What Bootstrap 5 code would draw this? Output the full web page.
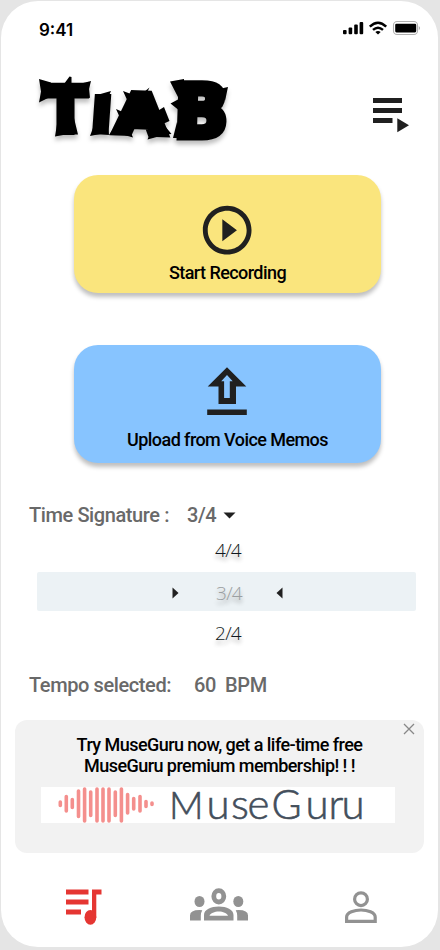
<!DOCTYPE html>
<html lang="en">
<head>
<meta charset="utf-8">
<meta name="viewport" content="width=device-width, initial-scale=1">
<title>TIAB</title>
<link href="https://cdn.jsdelivr.net/npm/bootstrap@5.3.0/dist/css/bootstrap.min.css" rel="stylesheet">
<style>
body{background:#e5e5e5;font-family:Roboto,"Liberation Sans",sans-serif;height:950px;overflow:hidden;padding:1px 2px 3px 1px}
.phone{width:437px;height:946px;background:#fff;border-radius:37px}
.status-bar{height:60px;padding:19px 19px 0 38px}
.clock{font:600 17px/20px Inter,sans-serif;color:#000}
.top-bar{height:114px;padding:10px 26px 0 32px}
.brand{filter:drop-shadow(0 4px 2px rgba(0,0,0,.25))}
.brand text{font-family:"DejaVu Sans",sans-serif;font-weight:700;fill:#000;stroke:#000;stroke-linejoin:miter}
.tile{width:307px;height:118px;margin-left:73px;border:0;border-radius:24px;box-shadow:0 4px 4px rgba(0,0,0,.25);font-size:18px;font-weight:500;line-height:20px;letter-spacing:-.57px;color:#000}
.tile svg{margin-right:1px}
.tile-record{background:#fae57d;padding-top:26px}
.tile-record span{margin-top:4px}
.tile-upload{background:#87c4ff;margin-top:52px;padding-top:22px}
.tile-upload span{margin-top:14px}
.setting{height:24px;font-size:20px;font-weight:500;line-height:24px;letter-spacing:-.4px;color:#696969;padding-left:28px}
.setting-time{margin-top:40px}
.setting-tempo{margin-top:20px}
.setting-time .s-label{width:158px}
.setting-tempo .s-label{width:165px}
.picker{height:126px;font:300 19px/24px "Open Sans",sans-serif;color:#101820;letter-spacing:-.8px;text-shadow:0 4px 4px rgba(0,0,0,.3)}
.picker-option{height:45px;padding:11px 0 0 17px}
.picker-option:last-child{padding-top:10px}
.picker-current{width:379px;height:39px;margin-left:36px;padding:2px 0 0 2px;border-radius:2px;background:#ecf2f5;color:#9b9fa1}
.picker-current span{margin:1px 34px 0 37px}
.promo{width:409px;height:133px;margin:23px 0 0 14px;border-radius:12px;background:#f2f2f2;padding-top:14px;font-size:18px;font-weight:500;line-height:21px;letter-spacing:-.55px;color:#000}
.promo .dismiss{position:absolute;right:9px;top:3px;line-height:0}
.promo-logo{width:354px;height:36px;background:#fff;margin:11px 0 0 26px}
.promo-logo text{font-family:Lato,sans-serif;font-weight:300;letter-spacing:0;fill:#434e5b;stroke:#434e5b;stroke-width:.6px}
.tabs{height:94px}
svg{display:block;flex:none;overflow:visible}
</style>
</head>
<body>
<main class="phone d-flex flex-column">
  <div class="status-bar d-flex justify-content-between">
    <span class="clock">9:41</span>
    <svg width="76" height="16" viewBox="343 20 76 16">
      <g><rect x="343" y="30" width="3.600" height="4.300" rx="1"/><rect x="348.600" y="27.500" width="3.600" height="6.800" rx="1"/><rect x="354.200" y="24.500" width="3.600" height="9.800" rx="1"/><rect x="359.600" y="22" width="3.600" height="12.300" rx="1"/></g>
      <g fill="none" stroke="#000" stroke-width="2.400"><path d="M369.800 26.600Q378 18.700 386.200 26.600M373 29.900q5-4.500 10 0"/></g><path d="M375.300 32q2.700-2.200 5.400 0L378 34.600z"/>
      <rect x="393.500" y="21.500" width="24" height="13" rx="3.600" fill="none" stroke="#b0b0b0" stroke-width="1.100"/><rect x="395.200" y="23.800" width="21" height="8.600" rx="1.300"/><path d="M418.800 26v4.200q2-2.100 0-4.200" fill="#999"/>
    </svg>
  </div>
  <header class="top-bar d-flex justify-content-between">
    <svg class="brand" width="200" height="76" viewBox="33 71 200 76" aria-label="TIAB">
      <text x="45" y="131.500" font-size="62" textLength="41" lengthAdjust="spacingAndGlyphs" stroke-width="7">T</text>
      <text transform="translate(91.500 131) skewX(-4)" font-size="46" textLength="18" lengthAdjust="spacingAndGlyphs" stroke-width="7">I</text>
      <text transform="translate(116 131.500) rotate(2)" font-size="52" textLength="48" lengthAdjust="spacingAndGlyphs" stroke-width="8">A</text>
      <text transform="translate(173.500 136.500) skewX(-2)" font-size="73" textLength="54" lengthAdjust="spacingAndGlyphs" stroke-width="7">B</text>
      <!-- brush flicks around the lettering -->
      <path d="M64 84l5.500-7.500 2 .5v7zM39 79l12 3.500-2 15-10 5 2-11zM91 81l-12 3 2 11 9 3-1-9zM58 118l-3 18.500 11-2zM74 118l4 16.500-11 0zM111 91l-14 4 10 5zM96 120l-6 16 10-2zM107 120l2 15-8-1zM123 91l12 4.500 6-1 8.500-7-3.500 7 6 .5-2 9-22-2zM116 109l9 4-4 7zM156 112l8-5 5.500 14-9 4zM118 122l-9 13 12-1zM129 128l4 9.500-12-3.500zM152 128l-4.500 11.500 11-3zM160 120l11.500 14-11 1zM170 81.500l14-2.500v10l-5 10zM170.500 103.500l13-7-3 15zM177 122l-4 16 11 0zM219 89l9-2-3 14z"/>
    </svg>
    <svg class="align-self-start mt-4" width="40" height="39" viewBox="372 95 40 39" fill="#202020">
      <path d="M373 98h29v5h-29zM373 108h29v5h-29zM373 118h19.500v5H373zM397.300 118.300l11.700 7-11.700 7z"/>
    </svg>
  </header>
  <button class="tile tile-record d-flex flex-column align-items-center">
    <svg width="58.400" height="58.400" viewBox="0 0 24 24" fill="#202020"><path d="M10 16.500l6-4.500-6-4.500zM12 2C6.480 2 2 6.480 2 12s4.480 10 10 10 10-4.480 10-10S17.520 2 12 2zm0 18c-4.410 0-8-3.590-8-8s3.590-8 8-8 8 3.590 8 8-3.590 8-8 8z"/></svg>
    <span>Start Recording</span>
  </button>
  <button class="tile tile-upload d-flex flex-column align-items-center">
    <svg width="40" height="49" viewBox="207 367 40 49" fill="#202020"><path fill-rule="evenodd" d="M227 367.300l19.300 19.200H236V404h-17.500v-17.500h-10.800zM227 375l-5.800 6.200h2.900V398h5.700v-16.800h2.900zM207.200 409.500h39.600v5.500h-39.600z"/></svg>
    <span>Upload from Voice Memos</span>
  </button>
  <div class="setting setting-time d-flex align-items-center"><span class="s-label">Time Signature :</span><span class="s-value">3/4</span>
    <svg width="12" height="7" viewBox="1 0 12 7" class="ms-2"><path d="M.5.5h12L6.500 6.500z" fill="#202020"/></svg></div>
  <div class="picker text-center">
    <div class="picker-option">4/4</div>
    <div class="picker-current d-flex justify-content-center align-items-center">
      <svg width="7" height="12" viewBox="0 0 7 12"><path d="M.5.5v11l6-5.500z" fill="#202020"/></svg>
      <span>3/4</span>
      <svg width="7" height="12" viewBox="0 0 7 12"><path d="M6.500.5v11l-6-5.500z" fill="#202020"/></svg>
    </div>
    <div class="picker-option">2/4</div>
  </div>
  <div class="setting setting-tempo d-flex align-items-center"><span class="s-label">Tempo selected:</span><span class="s-value">60&nbsp; BPM</span></div>
  <section class="promo position-relative">
    <span class="dismiss"><svg width="12" height="12" viewBox="0 0 12 12"><path d="M1 1l10 10M11 1L1 11" stroke="#888" stroke-width="1.300"/></svg></span>
    <div class="text-center">Try MuseGuru now, get a life-time free<br>MuseGuru premium membership! ! !</div>
    <div class="promo-logo">
      <svg width="354" height="36" viewBox="41 787 354 36">
        <path d="M60.300 802v3.500M66.300 796.500v14.500M72.300 799.500v8M78.500 791v25.500M84.600 789v32M90.700 792v23.500M97 789v32M103 789v32M109 789v32M115.300 792v23.500M121.400 789v32M127.600 794.500v18.500M133.700 798.500v10.500M140 796.500v14.500M146 801.500v5M152 803v1.500" fill="none" stroke="#f48f8d" stroke-width="3.600" stroke-linecap="round"/>
        <text y="818.500" font-size="42"><tspan x="169" font-size="38">M</tspan><tspan x="206.500 231 247.500">use</tspan><tspan x="271.500" font-size="41">G</tspan><tspan x="305.500 328.500 341.500">uru</tspan></text>
      </svg>
    </div>
  </section>
  <nav class="tabs">
    <svg width="437" height="94" viewBox="1 853 437 94">
      <g fill="#e53632"><path d="M66 889.500h22.500v5H66zM66 899.500h22.500v5H66zM66 909.500h15v5H66zM92 889.500h9.500v5h-5.200V917.500H92z"/><ellipse cx="90.400" cy="917.300" rx="5.900" ry="7.400"/></g>
      <g fill="#929292"><ellipse cx="199.500" cy="901.500" rx="5" ry="5.600"/><ellipse cx="238.300" cy="901.500" rx="5" ry="5.600"/><path d="M190 920.500v-5q0-5.500 9.500-5.500 1.400 0 2.800.2-1.500 2.500-1.500 5.300v5zM248 920.500v-5q0-5.500-9.500-5.500-1.400 0-2.800.2 1.500 2.500 1.500 5.300v5z"/><path fill-rule="evenodd" d="M204 920.500v-5.500c0-5.500 7-8.500 14.800-8.500s14.700 3 14.700 8.500v5.500zM209.500 915.800h18.500c-1-2.600-5-4.300-9.200-4.300s-8.300 1.700-9.300 4.300z"/></g>
      <ellipse cx="218.800" cy="896.300" rx="5" ry="5.700" fill="none" stroke="#929292" stroke-width="4.800"/>
      <g fill="none" stroke="#929292" stroke-width="3.200"><circle cx="361" cy="899.200" r="6.400"/><path d="M346.600 921.300v-4.300c0-4.500 8-7 14.400-7s14.200 2.500 14.200 7v4.300z"/></g>
    </svg>
  </nav>
</main>
<script src="https://cdn.jsdelivr.net/npm/bootstrap@5.3.0/dist/js/bootstrap.bundle.min.js"></script>
</body>
</html>
